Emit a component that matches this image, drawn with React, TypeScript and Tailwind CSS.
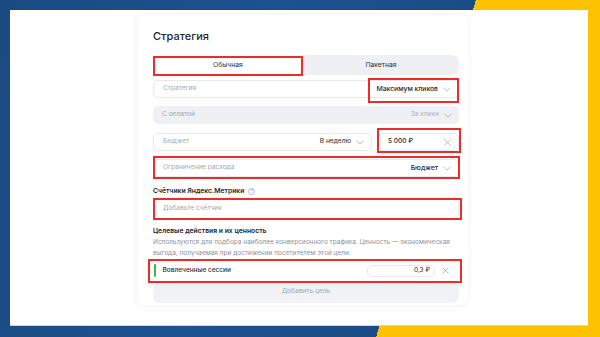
import type { ReactNode } from 'react';

const font = { fontFamily: 'Inter, "Noto Sans", sans-serif' };

function Chevron() {
  return (
    <svg width="8" height="5" viewBox="0 0 8 5" className="shrink-0">
      <polyline points="0.5,0.7 4,4.2 7.5,0.7" fill="none" stroke="#a7acb4" strokeWidth="0.8" />
    </svg>
  );
}

function Cross() {
  return (
    <svg width="7" height="7" viewBox="0 0 7 7" className="shrink-0">
      <path d="M0.5 0.5 L6.5 6.5 M6.5 0.5 L0.5 6.5" stroke="#a7acb4" strokeWidth="0.8" />
    </svg>
  );
}

function Field({ children, className = '' }: { children: ReactNode; className?: string }) {
  return (
    <div
      className={`relative flex h-[18px] items-center rounded-[5px] border border-[#e7e9ed] bg-white pl-[9px] pr-[7px] ${className}`}
    >
      {children}
    </div>
  );
}

export default function App() {
  return (
    <div
      style={font}
      className="relative flex h-[337px] w-[600px] overflow-hidden bg-[linear-gradient(106.5deg,#1a4a80_0%,#1d5190_40%,#1b4c85_68%,#fdc300_68%)] pl-[10px] pt-[10px]"
    >
      <div className="h-[316px] w-[578px] border-b border-[#c9d6e6] bg-white pl-[128px] pt-[5px]">
        {/* ── Strategy panel ── */}
        <div className="flex h-[290px] w-[330px] flex-col rounded-[8px] bg-white pl-[15px] pr-[9px] pt-[14px] shadow-[0_0_8px_rgba(30,40,60,0.07)]">
          <h2 className="text-[11px] font-medium leading-[14px] text-[#22262c]">Стратегия</h2>

          {/* Tabs */}
          <div className="mt-[12px] flex h-[20px] rounded-[7px] bg-[#eef0f3] text-[6.8px] text-[#2a2e34]">
            <div className="relative flex w-[150px] items-center justify-center rounded-[6px] bg-white">
              Обычная
              <span className="pointer-events-none absolute -bottom-[1px] left-0 right-0 top-[1px] border-2 border-[#ee2a2a]" />
            </div>
            <div className="flex flex-1 items-center justify-center">Пакетная</div>
          </div>

          {/* Strategy */}
          <Field className="mt-[5px]">
            <span className="flex-1 text-[6.6px] text-[#a3a8b0]">Стратегия</span>
            <span className="mr-[5px] whitespace-nowrap text-[6.8px] font-medium text-[#22262c]">Максимум кликов</span>
            <Chevron />
            <span className="pointer-events-none absolute -bottom-[6px] left-[214px] -right-[1px] -top-[3px] border-2 border-[#ee2a2a]" />
          </Field>

          {/* Payment */}
          <div className="mt-[8px] flex h-[18px] items-center rounded-[5px] bg-[#eef0f3] pl-[9px] pr-[7px]">
            <span className="flex-1 text-[6.6px] text-[#a3a8b0]">С оплатой</span>
            <span className="mr-[5px] text-[6.6px] text-[#aeb3ba]">За клики</span>
            <Chevron />
          </div>

          {/* Budget */}
          <div className="mt-[9px] flex gap-[6px]">
            <Field className="w-[219px]">
              <span className="flex-1 text-[6.6px] text-[#a3a8b0]">Бюджет</span>
              <span className="mr-[5px] text-[6.6px] text-[#22262c]">В неделю</span>
              <Chevron />
            </Field>
            <Field className="flex-1">
              <span className="flex-1 text-[6.6px] font-medium text-[#22262c]">5 000 ₽</span>
              <Cross />
              <span className="pointer-events-none absolute -bottom-[3px] -left-[2px] -right-[3px] -top-[6px] border-2 border-[#ee2a2a]" />
            </Field>
          </div>

          {/* Limit */}
          <Field className="mt-[8px]">
            <span className="flex-1 text-[6.6px] text-[#a3a8b0]">Ограничение расхода</span>
            <span className="mr-[5px] text-[6.8px] font-medium text-[#22262c]">Бюджет</span>
            <Chevron />
            <span className="pointer-events-none absolute -bottom-[3px] -left-[1px] -right-[2px] -top-[4px] border-2 border-[#ee2a2a]" />
          </Field>

          {/* Metrika */}
          <div className="mt-[9px] flex items-center gap-[4px] text-[6.8px] font-semibold leading-[10px] text-[#22262c]">
            Счётчики Яндекс.Метрики
            <span className="flex h-[7px] w-[7px] items-center justify-center rounded-full border border-[#b5bac1] text-[5px] font-normal leading-none text-[#9aa0a8]">
              ?
            </span>
          </div>
          <div className="relative mt-[3px] flex h-[20px] items-center rounded-[5px] border border-[#e7e9ed] bg-white pl-[9px]">
            <span className="text-[6.6px] text-[#a3a8b0]">Добавьте счётчик</span>
            <span className="pointer-events-none absolute -bottom-[2px] -left-[1px] -right-[4px] -top-[2px] border-2 border-[#ee2a2a]" />
          </div>

          {/* Goals */}
          <div className="mt-[7px] text-[6.8px] font-semibold leading-[10px] text-[#22262c]">
            Целевые действия и их ценность
          </div>
          <p className="mt-[0.5px] w-[300px] text-[6.5px] leading-[11px] text-[#8c929a]">
            Используются для подбора наиболее конверсионного трафика. Ценность — экономическая выгода, получаемая при достижении посетителем этой цели.
          </p>

          <div className="mt-[1px] rounded-[7px] bg-[#f0f2f5]">
            <div className="relative flex h-[22px] items-center rounded-t-[7px] bg-white pr-[10px]">
              <span className="ml-[0.5px] h-[13px] w-[2px] rounded-full bg-[#3fb84a]" />
              <span className="ml-[7px] flex-1 text-[6.5px] font-medium text-[#2a2e34]">Вовлеченные сессии</span>
              <div className="mr-[7px] flex h-[12px] w-[68px] items-center justify-end rounded-[5px] border border-[#e7e9ed] pr-[4px] text-[6.5px] text-[#22262c]">
                0,3 ₽
              </div>
              <Cross />
              <span className="pointer-events-none absolute -bottom-[1px] -left-[5px] -right-[3px] -top-[1px] border-2 border-[#ee2a2a]" />
            </div>
            <div className="flex h-[21px] items-center justify-center text-[6.6px] text-[#a3a8b0]">Добавить цель</div>
          </div>
        </div>
      </div>
    </div>
  );
}
